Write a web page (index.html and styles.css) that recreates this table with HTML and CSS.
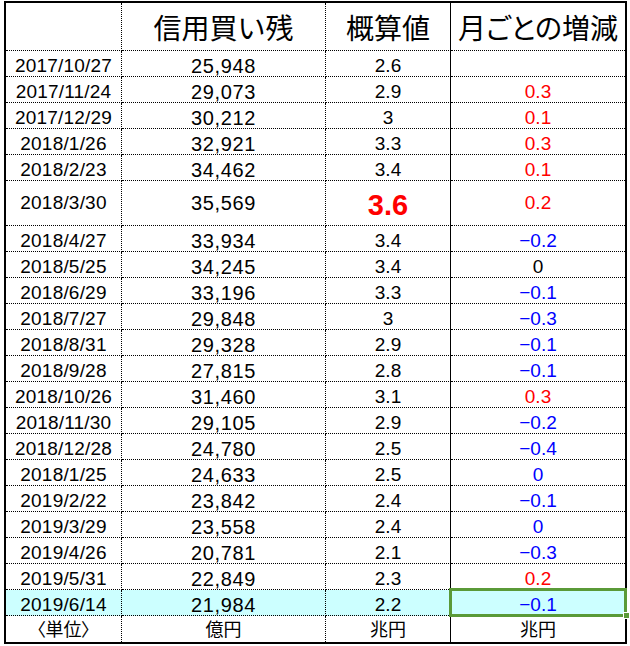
FILE: index.html
```html
<!DOCTYPE html>
<html lang="ja">
<head>
<meta charset="utf-8">
<title>信用買い残</title>
<link rel="stylesheet" href="styles.css">
</head>
<body>
<div class="sheet">
  <div class="row head">
    <div class="cell c1"></div>
    <div class="cell c2">信用買い残</div>
    <div class="cell c3">概算値</div>
    <div class="cell c4 palt">月ごとの増減</div>
  </div>
  <div class="row"><div class="cell c1">2017/10/27</div><div class="cell c2">25,948</div><div class="cell c3">2.6</div><div class="cell c4"></div></div>
  <div class="row"><div class="cell c1">2017/11/24</div><div class="cell c2">29,073</div><div class="cell c3">2.9</div><div class="cell c4 red">0.3</div></div>
  <div class="row"><div class="cell c1">2017/12/29</div><div class="cell c2">30,212</div><div class="cell c3">3</div><div class="cell c4 red">0.1</div></div>
  <div class="row"><div class="cell c1">2018/1/26</div><div class="cell c2">32,921</div><div class="cell c3">3.3</div><div class="cell c4 red">0.3</div></div>
  <div class="row"><div class="cell c1">2018/2/23</div><div class="cell c2">34,462</div><div class="cell c3">3.4</div><div class="cell c4 red">0.1</div></div>
  <div class="row tall"><div class="cell c1">2018/3/30</div><div class="cell c2">35,569</div><div class="cell c3 big">3.6</div><div class="cell c4 red">0.2</div></div>
  <div class="row"><div class="cell c1">2018/4/27</div><div class="cell c2">33,934</div><div class="cell c3">3.4</div><div class="cell c4 blue">−0.2</div></div>
  <div class="row"><div class="cell c1">2018/5/25</div><div class="cell c2">34,245</div><div class="cell c3">3.4</div><div class="cell c4">0</div></div>
  <div class="row"><div class="cell c1">2018/6/29</div><div class="cell c2">33,196</div><div class="cell c3">3.3</div><div class="cell c4 blue">−0.1</div></div>
  <div class="row"><div class="cell c1">2018/7/27</div><div class="cell c2">29,848</div><div class="cell c3">3</div><div class="cell c4 blue">−0.3</div></div>
  <div class="row"><div class="cell c1">2018/8/31</div><div class="cell c2">29,328</div><div class="cell c3">2.9</div><div class="cell c4 blue">−0.1</div></div>
  <div class="row"><div class="cell c1">2018/9/28</div><div class="cell c2">27,815</div><div class="cell c3">2.8</div><div class="cell c4 blue">−0.1</div></div>
  <div class="row"><div class="cell c1">2018/10/26</div><div class="cell c2">31,460</div><div class="cell c3">3.1</div><div class="cell c4 red">0.3</div></div>
  <div class="row"><div class="cell c1">2018/11/30</div><div class="cell c2">29,105</div><div class="cell c3">2.9</div><div class="cell c4 blue">−0.2</div></div>
  <div class="row"><div class="cell c1">2018/12/28</div><div class="cell c2">24,780</div><div class="cell c3">2.5</div><div class="cell c4 blue">−0.4</div></div>
  <div class="row"><div class="cell c1">2018/1/25</div><div class="cell c2">24,633</div><div class="cell c3">2.5</div><div class="cell c4 blue">0</div></div>
  <div class="row"><div class="cell c1">2019/2/22</div><div class="cell c2">23,842</div><div class="cell c3">2.4</div><div class="cell c4 blue">−0.1</div></div>
  <div class="row"><div class="cell c1">2019/3/29</div><div class="cell c2">23,558</div><div class="cell c3">2.4</div><div class="cell c4 blue">0</div></div>
  <div class="row"><div class="cell c1">2019/4/26</div><div class="cell c2">20,781</div><div class="cell c3">2.1</div><div class="cell c4 blue">−0.3</div></div>
  <div class="row"><div class="cell c1">2019/5/31</div><div class="cell c2">22,849</div><div class="cell c3">2.3</div><div class="cell c4 red">0.2</div></div>
  <div class="row sel"><div class="cell c1">2019/6/14</div><div class="cell c2">21,984</div><div class="cell c3">2.2</div><div class="cell c4 blue active">−0.1<span class="selbox"></span><span class="handle"></span></div></div>
  <div class="row unit"><div class="cell c1 palt">〈単位〉</div><div class="cell c2">億円</div><div class="cell c3">兆円</div><div class="cell c4">兆円</div></div>
</div>
</body>
</html>
```
FILE: styles.css
```css
* { box-sizing: border-box; }
html, body { margin: 0; padding: 0; background: #fff; }
body {
  font-family: "Liberation Sans", "Noto Sans CJK JP", sans-serif;
  color: #000;
}
.sheet {
  margin: 1px 0 0 4px;
  width: 623px;
  border: 2px solid #000;
}
.row {
  display: grid;
  grid-template-columns: 116px 204px 125px 174px;
  height: 26px;
}
.cell {
  border-bottom: 1px dotted #000;
  border-right: 1px dotted #000;
  text-align: center;
  white-space: nowrap;
  font-size: 19px;
  line-height: 20px;
  padding-top: 5px;
  overflow: visible;
}
.cell.c1 { letter-spacing: 0.2px; }
.cell.c2 { font-size: 20px; letter-spacing: 0.6px; }
.cell.c3 { border-right: 1px solid #000; }
.cell.c4 { border-right: none; }

.row.head { height: 48px; }
.row.head .cell {
  font-family: "Noto Sans CJK JP", sans-serif;
  font-size: 28px;
  line-height: 46px;
  padding-top: 1px;
  letter-spacing: 0;
}
.palt { font-feature-settings: "palt" 1; }

.row.tall { height: 45px; }
.row.tall .cell { line-height: 44px; padding-top: 0; }
.row.tall .cell.big {
  font-size: 29px;
  font-weight: bold;
  color: #ff0000;
  line-height: 40px;
  padding-top: 4px;
}

.red { color: #ff0000; }
.blue { color: #0000ff; }

.row.sel .cell { background: #ccffff; }
.cell.active { position: relative; }
.selbox {
  position: absolute;
  left: -2px;
  top: -2px;
  width: 178px;
  height: 29px;
  border: 3px solid #5a9a38;
}
.handle {
  position: absolute;
  left: 172px;
  top: 22px;
  width: 7px;
  height: 7px;
  background: #5a9a38;
  border: 1px solid #fff;
}

.row.unit .cell {
  border-bottom: none;
  font-family: "Noto Sans CJK JP", sans-serif;
  font-size: 18px;
  line-height: 25px;
  padding-top: 0;
  letter-spacing: 0;
}
```
